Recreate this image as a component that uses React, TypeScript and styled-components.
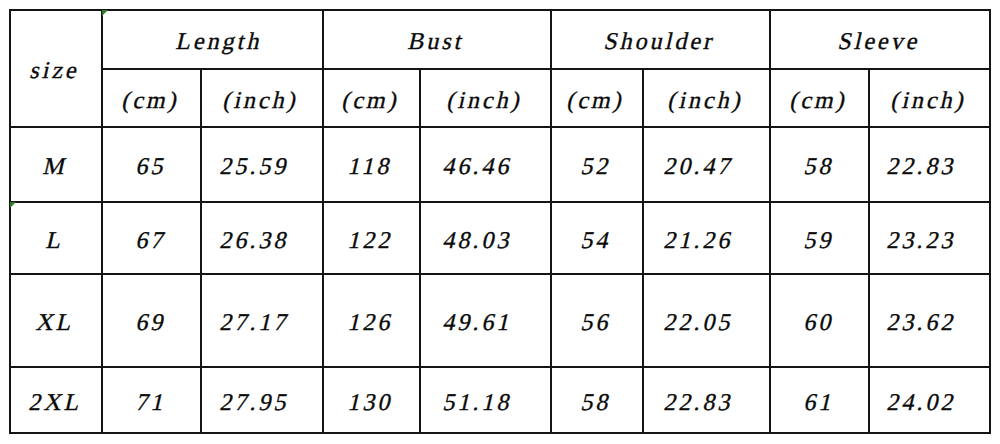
import React from "react";
import styled, { createGlobalStyle } from "styled-components";

const Global = createGlobalStyle`
  html, body { margin: 0; padding: 0; background: #ffffff; }
  body { font-family: "Liberation Serif", "Times New Roman", serif; }
`;

const Page = styled.div`
  width: 1000px;
  height: 444px;
  box-sizing: border-box;
  padding: 9px 0 0 9px;
  background: #ffffff;
`;

const Chart = styled.div`
  display: grid;
  width: 982px;
  box-sizing: border-box;
  grid-template-columns: 90px 97px 120px 95px 129px 90px 125px 97px 119px;
  grid-template-rows: 57px 56px 73px 70px 91px 64px;
  gap: 2px;
  border: 2px solid #141414;
  background: #141414;
`;

const Cell = styled.div<{ $rows?: number; $cols?: number; $padL?: number; $padR?: number }>`
  position: relative;
  background: #ffffff;
  display: flex;
  align-items: center;
  justify-content: center;
  padding-left: ${(p) => p.$padL ?? 0}px;
  padding-right: ${(p) => p.$padR ?? 0}px;
  padding-top: 3px;
  box-sizing: border-box;
  ${(p) => (p.$rows ? `grid-row: span ${p.$rows};` : "")}
  ${(p) => (p.$cols ? `grid-column: span ${p.$cols};` : "")}
`;

const Label = styled.span`
  display: inline-block;
  font-family: "Liberation Serif", "Times New Roman", serif;
  font-size: 24px;
  letter-spacing: 3px;
  color: #0a0a0a;
  -webkit-text-stroke: 0.35px #0a0a0a;
  transform: skewX(-13deg);
  white-space: pre;
  line-height: 1;
`;

const Marker = styled.i`
  position: absolute;
  top: -1px;
  left: -1px;
  width: 0;
  height: 0;
  border-top: 6px solid #2f7a2a;
  border-right: 6px solid transparent;
`;

const groups = ["Length", "Bust", "Shoulder", "Sleeve"];

const rows: { size: string; values: string[] }[] = [
  { size: "M", values: ["65", "25.59", "118", "46.46", "52", "20.47", "58", "22.83"] },
  { size: "L", values: ["67", "26.38", "122", "48.03", "54", "21.26", "59", "23.23"] },
  { size: "XL", values: ["69", "27.17", "126", "49.61", "56", "22.05", "60", "23.62"] },
  { size: "2XL", values: ["71", "27.95", "130", "51.18", "58", "22.83", "61", "24.02"] },
];

export default function App() {
  return (
    <Page>
      <Global />
      <Chart>
        <Cell $rows={2}>
          <Label>size</Label>
        </Cell>
        {groups.map((g, i) => (
          <Cell key={g} $cols={2} $padL={i === 0 ? 14 : 0}>
            {i === 0 && <Marker />}
            <Label>{g}</Label>
          </Cell>
        ))}
        {groups.map((g) => (
          <React.Fragment key={g + "-u"}>
            <Cell>
              <Label>(cm)</Label>
            </Cell>
            <Cell>
              <Label>(inch)</Label>
            </Cell>
          </React.Fragment>
        ))}
        {rows.map((r, ri) => (
          <React.Fragment key={r.size}>
            <Cell>
              {ri === 1 && <Marker />}
              <Label>{r.size}</Label>
            </Cell>
            {r.values.map((v, vi) => (
              <Cell key={vi} $padR={vi % 2 === 1 ? 14 : 0}>
                <Label>{v}</Label>
              </Cell>
            ))}
          </React.Fragment>
        ))}
      </Chart>
    </Page>
  );
}
